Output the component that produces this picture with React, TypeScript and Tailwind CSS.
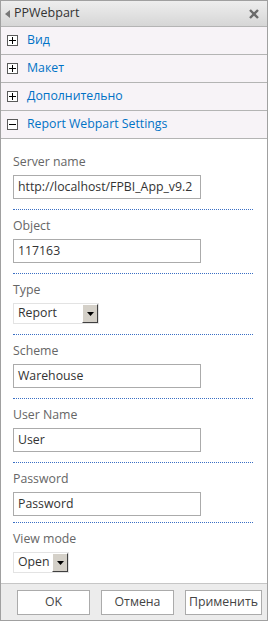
import React from 'react';

const font = { fontFamily: '"Open Sans", "Noto Sans", sans-serif' };

const sections = ['Вид', 'Макет', 'Дополнительно'];

const Toggle: React.FC<{ open?: boolean }> = ({ open }) => (
  <span className="flex h-[11px] w-[11px] items-center justify-center border border-[#5a5a5a] bg-white">
    <svg width="7" height="7" viewBox="0 0 7 7">
      <rect x="0" y="3" width="7" height="1" fill="#000" />
      {!open && <rect x="3" y="0" width="1" height="7" fill="#000" />}
    </svg>
  </span>
);

const SectionRow: React.FC<{ title: string; open?: boolean }> = ({ title, open }) => (
  <div className="flex h-[28px] items-center gap-[9px] border-b border-[#b4b4b4] bg-[#f7f3f7] pl-[6px]">
    <Toggle open={open} />
    <span className="text-[12.3px] text-[#0072c6]">{title}</span>
  </div>
);

const Dots: React.FC<{ gap?: string }> = ({ gap = 'mt-[10px]' }) => (
  <div className={`border-t border-dotted border-[#3a6fc4] ${gap}`} />
);

const Field: React.FC<{ label: string; value: string; gap?: string }> = ({ label, value, gap }) => (
  <div className="pt-[7px]">
    <div className="text-[12.3px] leading-[17px] text-[#666]">{label}</div>
    <div className="mt-[5px] flex h-[24px] w-[188px] items-center overflow-hidden whitespace-nowrap border border-[#ababab] bg-white pl-[4px] text-[12.3px] text-[#333]">
      {value}
    </div>
    <Dots gap={gap} />
  </div>
);

const Select: React.FC<{ label: string; value: string; width: string; last?: boolean }> = ({ label, value, width, last }) => (
  <div className="pt-[7px]">
    <div className="text-[12.3px] leading-[17px] text-[#666]">{label}</div>
    <div className={`mt-[5px] flex h-[21px] items-center justify-between border border-[#e3e3e3] bg-white pl-[4px] text-[12.3px] text-[#333] ${width}`}>
      <span>{value}</span>
      <span className="flex h-[19px] w-[16px] items-center justify-center border border-b-[#404040] border-l-white border-r-[#404040] border-t-white bg-[#d4d0c8]">
        <svg width="7" height="4" viewBox="0 0 7 4">
          <path d="M0 0h7L3.5 4z" fill="#000" />
        </svg>
      </span>
    </div>
    {!last && <Dots />}
  </div>
);

export default function App() {
  return (
    <div className="h-[624px] w-[270px] bg-white" style={font}>
      <div className="flex h-[621px] w-[268px] flex-col border border-[#a0a0a0]">
        <div className="flex h-[26px] items-center justify-between border-b border-[#b4b4b4] bg-gradient-to-b from-[#eeeeee] to-[#d6d6d6] pl-[4px] pr-[8px]">
          <div className="flex items-center gap-[4px]">
            <svg width="5" height="8" viewBox="0 0 5 8">
              <path d="M5 0v8L0 4z" fill="#777" />
            </svg>
            <span className="text-[12.5px] text-[#333]">PPWebpart</span>
          </div>
          <svg width="10" height="10" viewBox="0 0 10 10">
            <path d="M1 1l8 8M9 1l-8 8" stroke="#6a6a6a" strokeWidth="2.4" />
          </svg>
        </div>
        {sections.map((s) => (
          <SectionRow key={s} title={s} />
        ))}
        <SectionRow title="Report Webpart Settings" open />
        <div className="flex-1 bg-white pl-[12px] pr-[14px] pt-[7px]">
          <Field label="Server name" value="http://localhost/FPBI_App_v9.2" />
          <Field label="Object" value="117163" />
          <Select label="Type" value="Report" width="w-[86px]" />
          <Field label="Scheme" value="Warehouse" />
          <Field label="User Name" value="User" />
          <Field label="Password" value="Password" gap="mt-[6px]" />
          <Select label="View mode" value="Open" width="w-[56px]" last />
        </div>
        <div className="flex h-[37px] items-center justify-between border-t border-[#c6c6c6] bg-[#ececec] pl-[16px] pr-[5px]">
          {['OK', 'Отмена', 'Применить'].map((b) => (
            <button
              key={b}
              className={`h-[25px] border border-[#ababab] bg-white text-[12.3px] text-[#444] ${b === 'Применить' ? 'w-[77px]' : 'w-[73px]'}`}
            >
              {b}
            </button>
          ))}
        </div>
      </div>
    </div>
  );
}
